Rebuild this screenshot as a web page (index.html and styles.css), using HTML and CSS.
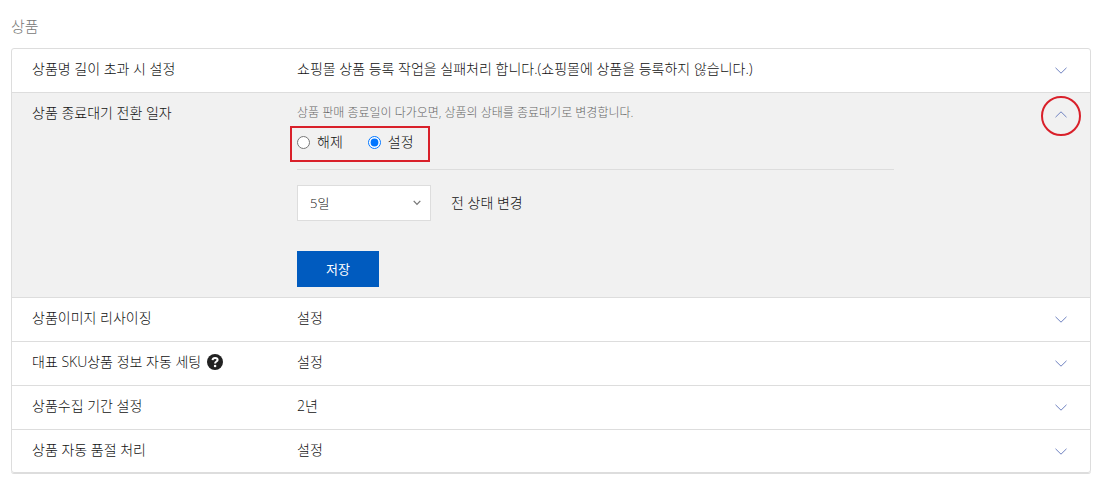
FILE: index.html
```html
<!DOCTYPE html>
<html lang="ko">
<head>
    <meta charset="UTF-8" />
    <meta name="viewport" content="width=device-width, initial-scale=1" />
    <title>상품 설정</title>
    <link rel="stylesheet" href="styles.css">
</head>
<body>

<h2 class="section-title">상품</h2>

<div class="settings">
    <div class="row">
        <div class="name">상품명 길이 초과 시 설정</div>
        <div class="value">쇼핑몰 상품 등록 작업을 실패처리 합니다.(쇼핑몰에 상품을 등록하지 않습니다.)</div>
        <button class="toggle" aria-label="펼치기">
            <svg width="12" height="7" viewBox="0 0 12 7"><path d="M.5 .8 6 6.2 11.5 .8" /></svg>
        </button>
    </div>

    <form class="row open">
        <div class="name">상품 종료대기 전환 일자</div>
        <div class="value">
            <p class="hint">상품 판매 종료일이 다가오면, 상품의 상태를 종료대기로 변경합니다.</p>
            <div class="radios">
                <label><input type="radio" name="wait" value="off" />해제</label>
                <label><input type="radio" name="wait" value="on" checked />설정</label>
            </div>
            <div class="days">
                <select id="days">
                    <option>5일</option>
                </select>
                <svg class="select-arrow" width="8" height="6" viewBox="0 0 8 6"><path d="M.7 .9 4 4.4 7.3 .9" /></svg>
                <label for="days">전 상태 변경</label>
            </div>
            <button type="button" class="save">저장</button>
        </div>
        <button type="button" class="toggle marked" aria-label="접기">
            <svg width="12" height="7" viewBox="0 0 12 7"><path d="M.5 6.2 6 .8 11.5 6.2" /></svg>
        </button>
    </form>

    <div class="row">
        <div class="name">상품이미지 리사이징</div>
        <div class="value">설정</div>
        <button class="toggle" aria-label="펼치기">
            <svg width="12" height="7" viewBox="0 0 12 7"><path d="M.5 .8 6 6.2 11.5 .8" /></svg>
        </button>
    </div>

    <div class="row">
        <div class="name">
            대표 SKU상품 정보 자동 세팅
            <svg class="help" width="16" height="16" viewBox="0 0 16 16" aria-hidden="true">
                <circle cx="8" cy="8" r="8" />
                <path d="M5.5 6.2C5.7 4.7 6.7 3.9 8.1 3.9c1.5 0 2.5.8 2.5 2C10.6 7.6 8.1 7.5 8.1 9.4" />
                <circle class="dot" cx="8.1" cy="12" r="1.3" />
            </svg>
        </div>
        <div class="value">설정</div>
        <button class="toggle" aria-label="펼치기">
            <svg width="12" height="7" viewBox="0 0 12 7"><path d="M.5 .8 6 6.2 11.5 .8" /></svg>
        </button>
    </div>

    <div class="row">
        <div class="name">상품수집 기간 설정</div>
        <div class="value">2년</div>
        <button class="toggle" aria-label="펼치기">
            <svg width="12" height="7" viewBox="0 0 12 7"><path d="M.5 .8 6 6.2 11.5 .8" /></svg>
        </button>
    </div>

    <div class="row">
        <div class="name">상품 자동 품절 처리</div>
        <div class="value">설정</div>
        <button class="toggle" aria-label="펼치기">
            <svg width="12" height="7" viewBox="0 0 12 7"><path d="M.5 .8 6 6.2 11.5 .8" /></svg>
        </button>
    </div>
</div>

</body>
</html>
```
FILE: styles.css
```css
* {
  box-sizing: border-box;
}
body {
  margin: 0;
  padding: 16px 9px 8px 11px;
  background: #fff;
  color: #111;
  font-family: 'Open Sans', 'Noto Sans CJK KR', sans-serif;
  font-size: 14px;
  font-weight: 300;
  line-height: 20px;
}
button,
select {
  font: inherit;
}
.section-title {
  margin: 0 0 12px;
  color: #777;
  font-size: 15px;
  font-weight: 300;
  line-height: 20px;
}
.settings {
  border: 1px solid #ddd;
  border-radius: 3px;
  box-shadow: 0 1px 0 #ddd;
}
.row {
  display: grid;
  grid-template-columns: 265px 1fr 40px;
  align-items: start;
  padding: 10px 9px 11px 20px;
}
.row + .row {
  border-top: 1px solid #ddd;
}
.row:last-child {
  padding-bottom: 10px;
}
.name {
  display: flex;
  align-items: center;
  gap: 6px;
}
.toggle {
  display: flex;
  justify-content: center;
  align-items: center;
  width: 40px;
  height: 22px;
  padding: 0;
  border: none;
  background: none;
  cursor: pointer;
}
.toggle path {
  fill: none;
  stroke: #6f82c0;
}
.row.open {
  padding-bottom: 10px;
  background: #f1f1f1;
}
.marked {
  height: 40px;
  margin-top: -7px;
  padding-bottom: 3px;
  border: 2px solid #d9202a;
  border-radius: 50%;
}
.hint {
  margin: 0 0 3px;
  color: #666;
  font-size: 12px;
  line-height: 20px;
}
.radios {
  display: flex;
  gap: 25px;
  width: 140px;
  height: 36px;
  margin-left: -7px;
  padding: 4px 5px;
  border: 2px solid #d9202a;
}
.radios label {
  display: flex;
  align-items: center;
  height: 20px;
}
.radios input {
  width: 13px;
  height: 13px;
  margin: 0 7px 0 0;
}
.days {
  display: flex;
  align-items: center;
  width: 597px;
  max-width: 100%;
  margin: 7px 0 30px;
  padding-top: 15px;
  border-top: 1px solid #ddd;
}
.days select {
  width: 134px;
  height: 36px;
  padding: 0 12px;
  appearance: none;
  border: 1px solid #ddd;
  border-radius: 0;
  background: #fff;
  color: #111;
  font-size: 13px;
}
.select-arrow {
  margin: 0 30px 0 -18px;
  fill: none;
  stroke: #777;
  stroke-width: 1.3;
  pointer-events: none;
}
.save {
  display: block;
  width: 82px;
  height: 36px;
  border: none;
  background: #005bbf;
  color: #fff;
  font-size: 13px;
  font-weight: 400;
  cursor: pointer;
}
.help {
  fill: #222;
}
.help path {
  fill: none;
  stroke: #fff;
  stroke-width: 2;
}
.help .dot {
  fill: #fff;
}
```
